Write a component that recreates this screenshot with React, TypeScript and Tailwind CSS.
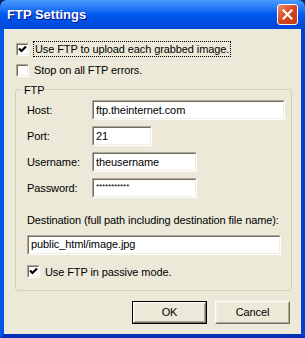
import React from "react";

const font = { fontFamily: '"Liberation Sans", Arial, sans-serif' };

function Sunken({ className = "", children }: { className?: string; children?: React.ReactNode }) {
  return (
    <div className={`border border-t-[#aca899] border-l-[#aca899] border-b-white border-r-white ${className}`}>
      <div className="h-full w-full border border-t-[#716f64] border-l-[#716f64] border-b-[#f1efe2] border-r-[#f1efe2] bg-white flex items-center">
        {children}
      </div>
    </div>
  );
}

function Check({ checked }: { checked: boolean }) {
  return (
    <Sunken className="w-[13px] h-[13px] shrink-0">
      {checked && (
        <svg width="9" height="9" viewBox="0 0 9 9" className="block">
          <path d="M1 3.5 L3.5 6 L8 1.5" stroke="#000" strokeWidth="2.2" fill="none" />
        </svg>
      )}
    </Sunken>
  );
}

function Input({ w, value, small }: { w: string; value: string; small?: boolean }) {
  return (
    <Sunken className={`${w} h-[20px]`}>
      <span className={`pl-[2px] ${small ? "text-[8px] pb-[3px]" : "text-[11px]"} text-black leading-none whitespace-nowrap tracking-[-0.1px]`}>{value}</span>
    </Sunken>
  );
}

function Button({ label, def }: { label: string; def?: boolean }) {
  const inner = (
    <div className="w-full h-full border border-t-white border-l-white border-b-[#716f64] border-r-[#716f64]">
      <div className="w-full h-full border border-t-[#f1efe2] border-l-[#f1efe2] border-b-[#aca899] border-r-[#aca899] flex items-center justify-center text-[11px] text-black">
        {label}
      </div>
    </div>
  );
  return def ? (
    <div className="w-[75px] h-[23px] border border-black">{inner}</div>
  ) : (
    <div className="w-[75px] h-[23px]">{inner}</div>
  );
}

function Row({ label, children }: { label: string; children: React.ReactNode }) {
  return (
    <div className="flex items-center h-[20px]">
      <span className="w-[65px] text-[11px] text-black">{label}</span>
      {children}
    </div>
  );
}

export default function App() {
  return (
    <div className="w-[305px] h-[338px] flex flex-col bg-[#0a246a] tracking-[-0.1px]" style={font}>
      <div className="h-[29px] rounded-t-[7px] bg-gradient-to-b from-[#4a9cff] via-[#0058ee] to-[#0047d8] flex items-center justify-between pl-[7px] pr-[7px] shrink-0">
        <span className="text-white font-bold text-[13px] tracking-normal [text-shadow:1px_1px_0_#0f1089]">FTP Settings</span>
        <div className="w-[21px] h-[21px] rounded-[3px] border border-white bg-gradient-to-br from-[#e68b6c] via-[#d9421c] to-[#c13b16] flex items-center justify-center">
          <svg width="11" height="11" viewBox="0 0 11 11">
            <path d="M1.5 1.5 L9.5 9.5 M9.5 1.5 L1.5 9.5" stroke="white" strokeWidth="2.2" strokeLinecap="square" />
          </svg>
        </div>
      </div>
      <div className="flex-1 border-l-4 border-r-4 border-b-4 border-l-[#0055ea] border-r-[#0040d0] border-b-[#0030b8] bg-[#ece9d8] flex flex-col px-[11px] pt-[12px]">
        <div className="flex items-center gap-[4px] pl-[1px]">
          <Check checked />
          <span className="text-[11px] text-black px-[1px] border border-dotted border-black leading-[14px]">
            Use FTP to upload each grabbed image.
          </span>
        </div>
        <div className="flex items-center gap-[5px] pl-[1px] mt-[6px]">
          <Check checked={false} />
          <span className="text-[11px] text-black leading-[14px]">Stop on all FTP errors.</span>
        </div>
        <div className="relative mt-[12px] border border-[#d0d0bf] rounded-[3px] h-[202px] w-[277px] pl-[11px] pt-[10px]">
          <span className="absolute -top-[8px] left-[6px] bg-[#ece9d8] px-[2px] text-[11px] text-black">FTP</span>
          <div className="flex flex-col gap-[6px]">
            <Row label="Host:"><Input w="w-[193px]" value="ftp.theinternet.com" /></Row>
            <Row label="Port:"><Input w="w-[60px]" value="21" /></Row>
            <Row label="Username:"><Input w="w-[105px]" value="theusername" /></Row>
            <Row label="Password:"><Input w="w-[105px]" value="***********" small /></Row>
          </div>
          <div className="mt-[14px] text-[11px] text-black">Destination (full path including destination file name):</div>
          <div className="mt-[6px]"><Input w="w-[254px]" value="public_html/image.jpg" /></div>
          <div className="flex items-center gap-[5px] mt-[9px]">
            <Check checked />
            <span className="text-[11px] text-black">Use FTP in passive mode.</span>
          </div>
        </div>
        <div className="flex justify-end gap-[8px] mt-[10px]">
          <Button label="OK" def />
          <Button label="Cancel" />
        </div>
      </div>
    </div>
  );
}
